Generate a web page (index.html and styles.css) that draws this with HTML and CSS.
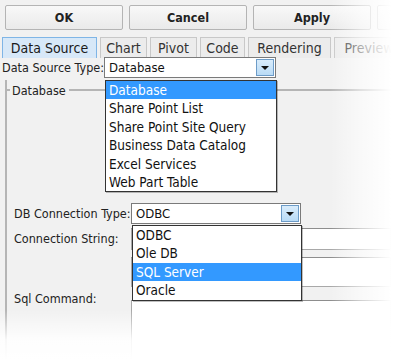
FILE: index.html
```html
<!DOCTYPE html>
<html>
<head>
<meta charset="utf-8">
<link rel="stylesheet" href="styles.css">
</head>
<body>
<div class="page">
  <div class="toolbar">
    <div class="btn">OK</div>
    <div class="btn">Cancel</div>
    <div class="btn">Apply</div>
    <div class="btn ghost"></div>
  </div>
  <div class="tabs">
    <div class="tab active">Data Source</div>
    <div class="tab t-chart">Chart</div>
    <div class="tab t-pivot">Pivot</div>
    <div class="tab t-code">Code</div>
    <div class="tab t-rend">Rendering</div>
    <div class="tab t-prev">Preview</div>
  </div>
  <div class="content">
    <div class="row first">
      <span class="label l1">Data Source Type:</span>
      <div class="select s1">
        <span class="value">Database</span>
        <span class="arrow"><span class="tri"></span></span>
        <ul class="list">
          <li class="sel">Database</li>
          <li>Share Point List</li>
          <li>Share Point Site Query</li>
          <li>Business Data Catalog</li>
          <li>Excel Services</li>
          <li>Web Part Table</li>
        </ul>
      </div>
    </div>
    <div class="fieldset">
      <div class="legend-row"><span class="tick"></span><span class="legend">Database</span><span class="rule"></span></div>
      <div class="fs-body">
        <div class="row dbrow">
          <span class="label l2">DB Connection Type:</span>
          <div class="select s2">
            <span class="value">ODBC</span>
            <span class="arrow"><span class="tri"></span></span>
            <ul class="list list2">
              <li>ODBC</li>
              <li>Ole DB</li>
              <li class="sel">SQL Server</li>
              <li>Oracle</li>
            </ul>
          </div>
        </div>
        <div class="row connrow">
          <span class="label l2">Connection String:</span>
          <div class="boxes">
            <div class="textbox tb1"></div>
            <div class="textbox tb2"></div>
          </div>
        </div>
        <div class="row sqlrow">
          <span class="label l2">Sql Command:</span>
          <div class="textbox tb3"></div>
        </div>
      </div>
    </div>
  </div>
  <div class="fade-right"></div>
  <div class="fade-bottom"></div>
</div>
</body>
</html>
```
FILE: styles.css
```css
* { box-sizing: border-box; }
html, body { margin: 0; padding: 0; }
body {
  width: 400px;
  height: 360px;
  overflow: hidden;
  background: #ffffff;
  font-family: "DejaVu Sans Condensed", "DejaVu Sans", sans-serif;
  font-size: 12.5px;
  color: #1e1e1e;
}
.page {
  position: relative;
  width: 400px;
  height: 360px;
  background: #f1f1f1;
  overflow: hidden;
}
.toolbar {
  display: flex;
  gap: 6px;
  padding: 5px 0 0 5px;
}
.btn {
  flex: none;
  width: 118px;
  height: 25px;
  border: 1px solid #b4b4b4;
  border-radius: 2px;
  background: linear-gradient(#f8f8f8, #eaeaea);
  font-weight: bold;
  font-size: 12.5px;
  display: flex;
  align-items: center;
  justify-content: center;
  color: #222;
}
.tabs {
  display: flex;
  margin-top: 7px;
  padding-left: 2px;
  height: 21px;
}
.tab {
  flex: none;
  height: 21px;
  margin-right: 3px;
  border: 1px solid #c8c8c8;
  border-bottom: none;
  background: #ececec;
  display: flex;
  align-items: center;
  justify-content: center;
  font-size: 14px;
  color: #333;
}
.tab.active {
  background: #d7e8f8;
  border-color: #7fb5e6;
  color: #1a1a1a;
  width: 95px;
  margin-right: 3px;
}
.t-chart { width: 47px; }
.t-pivot { width: 47px; }
.t-code { width: 45px; }
.t-rend { width: 83px; }
.t-prev { width: 70px; }
.content {
  position: relative;
}
.row {
  display: flex;
  align-items: flex-start;
}
.first {
  height: 21px;
  margin-top: -1px;
  position: relative;
  z-index: 3;
}
.label {
  font-size: 12.5px;
  color: #222;
}
.l1 {
  width: 104px;
  padding-left: 2px;
  line-height: 21px;
}
.select {
  position: relative;
  height: 21px;
  background: #fff;
  border: 1px solid #7a7a7a;
  display: flex;
  align-items: center;
}
.s1 { width: 172px; }
.s2 { width: 170px; }
.value {
  flex: 1;
  padding-left: 4px;
  font-size: 13px;
  color: #111;
}
.arrow {
  width: 18px;
  height: 17px;
  margin-right: 1px;
  border: 1px solid #6d9cc8;
  background: linear-gradient(#d9ecfb, #b9dbf6);
  display: flex;
  align-items: center;
  justify-content: center;
}
.tri {
  width: 0;
  height: 0;
  border-left: 4px solid transparent;
  border-right: 4px solid transparent;
  border-top: 4px solid #111;
}
.list {
  position: absolute;
  left: 0;
  top: 22px;
  width: 172px;
  margin: 0;
  padding: 0;
  list-style: none;
  background: #fff;
  border: 1px solid #333;
  box-shadow: 1px 1px 0 rgba(0,0,0,0.25);
  z-index: 5;
}
.list li {
  height: 18.4px;
  line-height: 18.4px;
  padding-left: 3px;
  font-size: 13.5px;
  color: #111;
}
.list li.sel {
  background: #3399ff;
  color: #fff;
}
.list2 { width: 170px; left: 0; top: 21px; }
.fieldset {
  position: relative;
  margin-left: 5px;
  margin-top: 2px;
  border-left: 2px solid #b5b5b5;
  height: 300px;
}
.legend-row {
  display: flex;
  align-items: center;
  height: 20px;
  margin-left: -2px;
}
.tick {
  width: 5px;
  border-top: 2px solid #b5b5b5;
}
.legend {
  padding: 0 3px 0 2px;
  font-size: 12.5px;
  color: #222;
}
.rule {
  flex: 1;
  border-top: 2px solid #b5b5b5;
}
.fs-body {
  padding-left: 7px;
}
.dbrow {
  margin-top: 103px;
  height: 22px;
  position: relative;
  z-index: 4;
}
.l2 {
  width: 117px;
  line-height: 22px;
}
.connrow {
  margin-top: 3px;
  height: 59px;
}
.boxes {
  display: flex;
  flex-direction: column;
  gap: 7px;
}
.textbox {
  background: #fff;
  border: 1px solid #a8a8a8;
  border-top-color: #8d8d8d;
  width: 260px;
}
.tb1 { height: 22px; }
.tb2 { height: 30px; }
.sqlrow { margin-top: 3px; }
.sqlrow .l2 { line-height: 18px; }
.tb3 { height: 60px; margin-top: 10px; }
.fade-right {
  position: absolute;
  top: 0;
  right: 0;
  width: 70px;
  height: 360px;
  background: linear-gradient(to right, rgba(255,255,255,0), rgba(255,255,255,0.6) 45%, #fff 88%);
  z-index: 10;
  pointer-events: none;
}
.fade-bottom {
  position: absolute;
  left: 0;
  bottom: 0;
  width: 400px;
  height: 50px;
  background: linear-gradient(to bottom, rgba(255,255,255,0), rgba(255,255,255,0.9) 60%, #fff);
  z-index: 10;
  pointer-events: none;
}
```
